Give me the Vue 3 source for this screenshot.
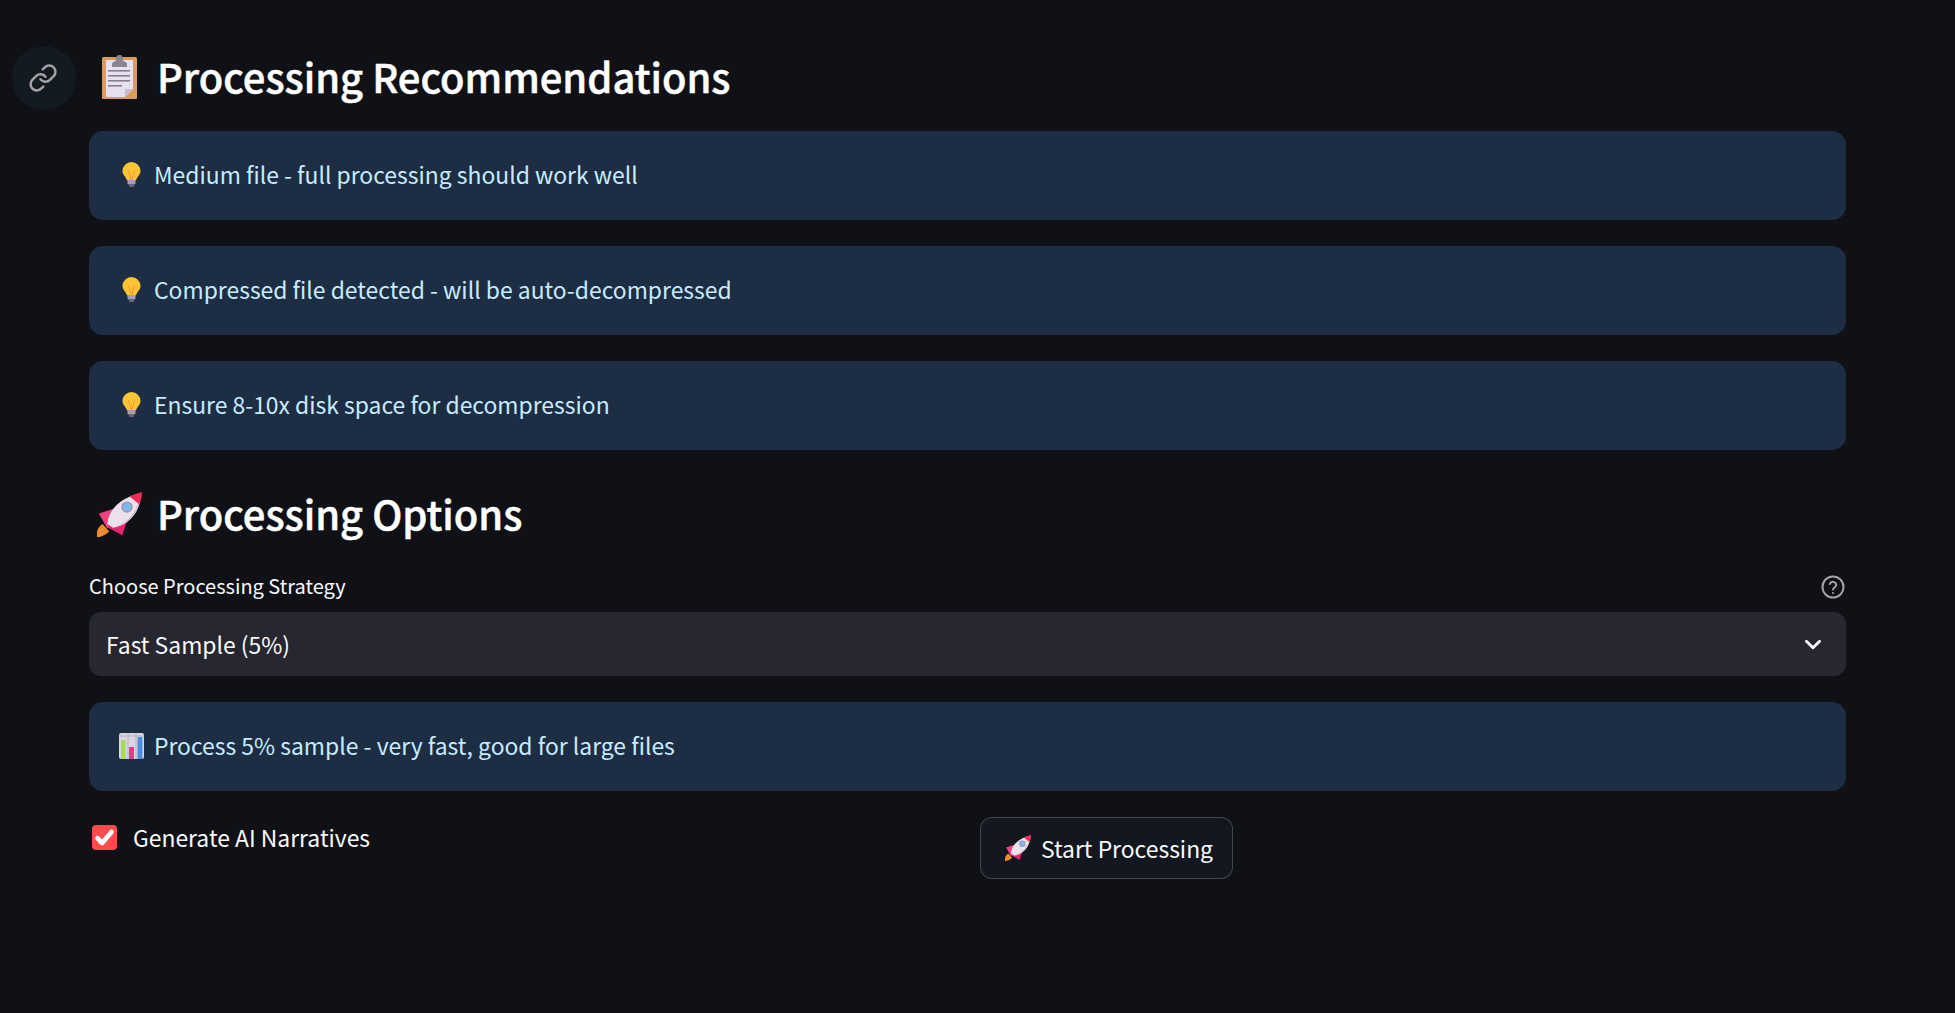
<script setup>
const tips = [
  'Medium file - full processing should work well',
  'Compressed file detected - will be auto-decompressed',
  'Ensure 8-10x disk space for decompression'
]
</script>

<template>
  <div class="page">
    <a class="anchor-link">
      <svg viewBox="0 0 24 24" fill="none" stroke="currentColor" stroke-width="2" stroke-linecap="round" stroke-linejoin="round">
        <path d="M10 13a5 5 0 0 0 7.54.54l3-3a5 5 0 0 0-7.07-7.07l-1.72 1.71"/>
        <path d="M14 11a5 5 0 0 0-7.54-.54l-3 3a5 5 0 0 0 7.07 7.07l1.71-1.71"/>
      </svg>
    </a>

    <h2 class="heading first">
      <span class="head-slot">
        <!-- clipboard -->
        <svg class="clipboard" viewBox="0 0 35 44">
          <rect x="0" y="2" width="35" height="42" rx="1.5" fill="#dc9a5e"/>
          <path d="M4 5h27v29l-8 8H5a1 1 0 0 1-1-1z" fill="#e6e0f0"/>
          <path d="M23 42v-8h8z" fill="#c6bfd2"/>
          <path d="M10 12V8l4-2.500V2.500L16 0h3l2 2.500v3L25 8v4z" fill="#8b858f"/>
          <rect x="6" y="15" width="22" height="1.600" fill="#85808f"/>
          <rect x="6" y="20" width="22" height="1.600" fill="#85808f"/>
          <rect x="6" y="25" width="22" height="1.600" fill="#85808f"/>
          <rect x="6" y="30" width="14" height="1.600" fill="#85808f"/>
        </svg>
      </span>
      <span class="heading-text">Processing Recommendations</span>
    </h2>

    <div v-for="tip in tips" :key="tip" class="alert">
      <span class="emoji-slot">
        <svg class="bulb" viewBox="0 0 19 25">
          <path d="M9.500 0a9 9 0 0 0-9 9c0 4 3.500 5.500 4.500 9.500h9c1-4 4.500-5.500 4.500-9.500a9 9 0 0 0-9-9z" fill="#fdc534"/>
          <path d="M6.500 8.500l3 10 3-10" fill="none" stroke="#f0962b" stroke-width="1"/>
          <rect x="5.500" y="18" width="8" height="4.500" rx="1" fill="#a99cb5"/>
          <rect x="7" y="22.500" width="5" height="2.500" rx="1" fill="#6f6580"/>
        </svg>
      </span>
      <span class="alert-text">{{ tip }}</span>
    </div>

    <h2 class="heading second">
      <span class="head-slot">
        <svg class="rocket" viewBox="0 0 48 48">
          <path d="M0 48c-1-6 1-11 6-14l7 8c-3 3-8 6-13 6z" fill="#ef8a2e"/>
          <path d="M2 23l15-5 1 15-7 6z" fill="#f0407f"/>
          <path d="M27 46l5-15-17-1-3 8z" fill="#e9246f"/>
          <path d="M11 34C12 20 24 6 47 1c0 20-14 35-30 37z" fill="#ebe1ec"/>
          <path d="M17 38c14-3 24-15 29-31-1 15-13 29-29 31z" fill="#cdbfd5"/>
          <path d="M35 5C38 3 43 1.500 48 0c0 5-1 9-3 13z" fill="#ee2c55"/>
          <circle cx="32" cy="16" r="6" fill="#9c97ad"/>
          <circle cx="32" cy="16" r="4.300" fill="#7cb8f5"/>
        </svg>
      </span>
      <span class="heading-text">Processing Options</span>
    </h2>

    <div class="field-label">
      <span>Choose Processing Strategy</span>
      <svg class="help" viewBox="0 0 24 24" fill="none" stroke="currentColor" stroke-width="2" stroke-linecap="round">
        <circle cx="12" cy="12" r="10.500"/>
        <path d="M8.800 9a3.300 3.300 0 0 1 6.400 1c0 2.200-3.200 2.600-3.200 4.500"/>
        <path d="M12 18v.1"/>
      </svg>
    </div>
    <div class="select">
      <span>Fast Sample (5%)</span>
      <svg viewBox="0 0 16 10" fill="none" stroke="currentColor" stroke-width="2.600" stroke-linecap="round" stroke-linejoin="round">
        <path d="M2 2l6 6 6-6"/>
      </svg>
    </div>

    <div class="alert">
      <span class="emoji-slot">
        <svg class="chart" viewBox="0 0 25 26">
          <rect width="25" height="26" rx="2" fill="#dcd6e4"/>
          <path d="M0 3h25M9 0v26M17 0v26" stroke="#b5afc0" stroke-width="1"/>
          <rect x="2" y="7" width="4.500" height="19" fill="#a8dc58"/>
          <rect x="10" y="14" width="5" height="12" fill="#ea3a85"/>
          <rect x="18.500" y="4" width="5" height="22" fill="#4a90e2"/>
        </svg>
      </span>
      <span class="alert-text">Process 5% sample - very fast, good for large files</span>
    </div>

    <div class="actions">
      <label class="check">
        <span class="box">
          <svg viewBox="0 0 16 16" fill="none" stroke="#fff" stroke-width="3" stroke-linecap="round" stroke-linejoin="round">
            <path d="M3.500 8.500l3 3 6-7"/>
          </svg>
        </span>
        <span class="check-text">Generate AI Narratives</span>
      </label>
      <div>
        <button class="start">
          <svg class="btn-emoji" viewBox="0 0 48 48">
            <path d="M0 48c-1-6 1-11 6-14l7 8c-3 3-8 6-13 6z" fill="#ef8a2e"/>
            <path d="M2 23l15-5 1 15-7 6z" fill="#f0407f"/>
            <path d="M27 46l5-15-17-1-3 8z" fill="#e9246f"/>
            <path d="M11 34C12 20 24 6 47 1c0 20-14 35-30 37z" fill="#ebe1ec"/>
            <path d="M17 38c14-3 24-15 29-31-1 15-13 29-29 31z" fill="#cdbfd5"/>
            <path d="M35 5C38 3 43 1.500 48 0c0 5-1 9-3 13z" fill="#ee2c55"/>
            <circle cx="32" cy="16" r="6" fill="#9c97ad"/>
            <circle cx="32" cy="16" r="4.300" fill="#7cb8f5"/>
          </svg>
          <span>Start Processing</span>
        </button>
      </div>
    </div>
  </div>
</template>

<style scoped>
.page {
  position: relative;
  box-sizing: border-box;
  height: 1013px;
  padding: 0 109px 0 89px;
  background: #0f1116;
  color: #fafafa;
  font-family: "Noto Sans CJK SC", "Noto Sans", sans-serif;
  overflow: hidden;
}

.anchor-link {
  position: absolute;
  left: 12px;
  top: 46px;
  width: 64px;
  height: 64px;
  display: flex;
  align-items: center;
  justify-content: center;
  border-radius: 50%;
  background: #131a21;
  color: #a3a3a3;
}

.anchor-link svg {
  width: 30px;
  height: 30px;
  transform: translateX(-1px);
}

.heading {
  display: flex;
  align-items: center;
  gap: 15px;
  margin: 0;
  height: 60px;
  padding-left: 8px;
  font-size: 39.9px;
  font-weight: 500;
  line-height: 60px;
  color: #fff;
}

.heading-text {
  margin-bottom: 2px;
  -webkit-text-stroke: 0.5px #fff;
}

.heading.first {
  margin-top: 47px;
  margin-bottom: 24px;
}

.heading.second {
  margin-top: 34px;
  margin-bottom: 28px;
}

.head-slot {
  display: flex;
  justify-content: center;
  width: 45px;
  flex: none;
}

.clipboard {
  width: 35px;
  height: 44px;
}

.rocket {
  width: 45px;
  height: 45px;
}

.alert {
  display: flex;
  align-items: center;
  gap: 9px;
  height: 89px;
  margin-bottom: 26px;
  padding: 0 29px;
  border-radius: 14px;
  background: #1d2e44;
  color: #c7ebff;
  font-size: 22.9px;
}

.alert-text {
  margin-bottom: 3px;
}

.emoji-slot {
  display: flex;
  justify-content: center;
  width: 27px;
  margin-bottom: 2px;
  flex: none;
}

.bulb {
  width: 19px;
  height: 25px;
}

.chart {
  width: 25px;
  height: 26px;
}

.field-label {
  display: flex;
  align-items: center;
  justify-content: space-between;
  height: 26px;
  margin-bottom: 14px;
  font-size: 20px;
}

.help {
  width: 24px;
  height: 24px;
  margin: 4px 1px 0 0;
  color: #a3a3a3;
}

.select {
  display: flex;
  align-items: center;
  justify-content: space-between;
  height: 64px;
  margin-bottom: 26px;
  padding: 0 24px 0 17px;
  border-radius: 12px;
  background: #262730;
  font-size: 22.9px;
}

.select svg {
  width: 18px;
  height: 11px;
}

.actions {
  display: grid;
  grid-template-columns: 1fr 1fr;
  gap: 25px;
}

.check {
  display: flex;
  align-items: center;
  gap: 16px;
  height: 25px;
  margin-top: 8px;
  padding-left: 3px;
  font-size: 22.9px;
}

.check-text {
  margin-bottom: 2px;
}

.box {
  display: flex;
  width: 25px;
  height: 25px;
  border-radius: 4px;
  background: #ff4b4b;
}

.start {
  display: flex;
  align-items: center;
  gap: 10px;
  height: 62px;
  padding: 0 19px 0 24px;
  border: 1px solid rgba(250, 250, 250, 0.2);
  border-radius: 12px;
  background: #131720;
  color: #fafafa;
  font-family: inherit;
  font-size: 22.9px;
}

.btn-emoji {
  width: 26px;
  height: 26px;
}
</style>

<style>
body {
  background: #0f1116;
}
</style>
